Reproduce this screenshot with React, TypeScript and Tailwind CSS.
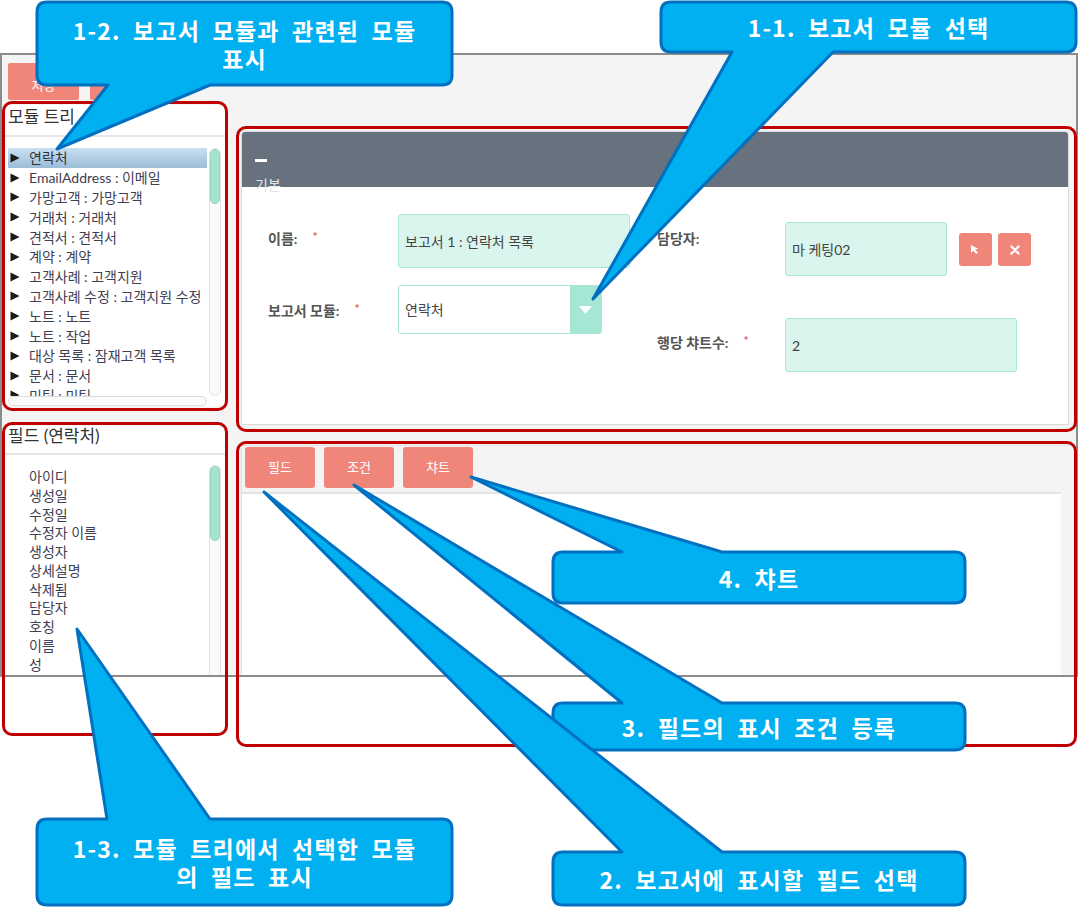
import React from "react";

const tree = [
  "연락처",
  "EmailAddress : 이메일",
  "가망고객 : 가망고객",
  "거래처 : 거래처",
  "견적서 : 견적서",
  "계약 : 계약",
  "고객사례 : 고객지원",
  "고객사례 수정 : 고객지원 수정",
  "노트 : 노트",
  "노트 : 작업",
  "대상 목록 : 잠재고객 목록",
  "문서 : 문서",
  "미팅 : 미팅",
];

const fields = [
  "아이디",
  "생성일",
  "수정일",
  "수정자 이름",
  "생성자",
  "상세설명",
  "삭제됨",
  "담당자",
  "호칭",
  "이름",
  "성",
];

function Tri() {
  return (
    <svg width="10" height="10" viewBox="0 0 10 10" className="shrink-0">
      <path d="M0.5 0.5 L9.5 5 L0.5 9.5 Z" fill="#1b1b1b" />
    </svg>
  );
}

function Callouts() {
  const paths = [
    // 1-3
    "M47,819 H107 L77,629 L210,819 H442 Q452,819 452,829 V895 Q452,905 442,905 H47 Q37,905 37,895 V829 Q37,819 47,819 Z",
    // 1-2
    "M47,2 H442 Q452,2 452,12 V75 Q452,85 442,85 H210 L57,149 L108,85 H47 Q37,85 37,75 V12 Q37,2 47,2 Z",
    // 1-1
    "M671,2 H1066 Q1076,2 1076,12 V42 Q1076,52 1066,52 H833 L593,299 L732,52 H671 Q661,52 661,42 V12 Q661,2 671,2 Z",
    // 3
    "M563,703 H622 L354,485 L722,703 H955 Q965,703 965,713 V740 Q965,750 955,750 H563 Q553,750 553,740 V713 Q553,703 563,703 Z",
    // 2
    "M563,852 H622 L264,492 L722,852 H955 Q965,852 965,862 V895 Q965,905 955,905 H563 Q553,905 553,895 V862 Q553,852 563,852 Z",
    // 4
    "M563,552 H622 L471,477 L722,552 H955 Q965,552 965,562 V593 Q965,603 955,603 H563 Q553,603 553,593 V562 Q553,552 563,552 Z",
  ];
  return (
    <svg
      className="absolute left-0 top-0 pointer-events-none"
      width="1078"
      height="909"
      viewBox="0 0 1078 909"
    >
      {paths.map((d, i) => (
        <path key={i} d={d} fill="#00b0f0" stroke="#0070c0" strokeWidth="3" strokeLinejoin="round" />
      ))}
    </svg>
  );
}

const calloutText =
  "absolute flex flex-col items-center justify-center text-center text-white font-bold text-[23px] leading-[28px] tracking-[1.2px] [word-spacing:6px] font-['Noto_Sans_CJK_KR',sans-serif]";

const label = "leading-[20px] text-[14px] font-bold text-[#555]";
const star = "ml-[15px] text-[12px] text-[#e05a5a] relative top-[-3px]";
const mintInput =
  "bg-[#d9f5ed] border border-[#a9e7d3] rounded-[3px] px-[6px] flex items-center text-[14px] text-[#444]";

export default function App() {
  return (
    <div className="relative w-[1078px] h-[909px] overflow-hidden bg-white font-[Lato,'Noto_Sans_CJK_KR',sans-serif]">
      {/* screenshot */}
      <div className="mt-[53px] w-[1078px] h-[624px] border-2 border-[#8c8c8c] bg-[#f4f4f4] flex flex-col">
        <div className="flex gap-[11px] pt-[8px] pl-[6px]">
          <div className="w-[71px] h-[37px] bg-[#f0867a] text-white text-[13px] rounded-[2px] flex items-center justify-center pt-[8px]">
            저장
          </div>
          <div className="w-[70px] h-[37px] bg-[#f0867a] text-white text-[13px] rounded-[2px] flex items-center justify-center pt-[8px]">
            취소
          </div>
        </div>

        <div className="flex flex-1 min-h-0 mt-[5px]">
          {/* left column */}
          <div className="ml-[3px] w-[220px] flex flex-col">
            {/* module tree */}
            <div className="h-[301px] shrink-0 bg-white flex flex-col">
              <div className="h-[32px] shrink-0 border-b-2 border-[#e6e6e6] px-[3px] text-[17px] leading-[24px] text-[#333]">
                모듈 트리
              </div>
              <div className="flex h-[259px] shrink-0">
                <div className="flex-1 overflow-hidden pt-[11px] pl-[3px] pr-[2px]">
                  {tree.map((t, i) => (
                    <div
                      key={i}
                      className={
                        "h-[19.8px] flex items-center pl-[2px] text-[14px] whitespace-nowrap " +
                        (i === 0
                          ? "bg-gradient-to-b from-[#c9e0f2] to-[#9cbcd8] text-[#333]"
                          : "text-[#3f4052]")
                      }
                    >
                      <Tri />
                      <span className="ml-[9px]">{t}</span>
                    </div>
                  ))}
                </div>
                <div className="w-[12px] mr-[4px] mt-[11px] rounded-full border border-[#e2e2e2] bg-[#fafafa] overflow-hidden">
                  <div className="h-[55px] rounded-full bg-[#a4e3cd] border border-[#8fd8c0]" />
                </div>
              </div>
              <div className="h-[10px] shrink-0 ml-[3px] mr-[18px] rounded-full border border-[#dedede] bg-[#fafafa]" />
            </div>

            {/* fields */}
            <div className="mt-[20px] flex-1 min-h-0 bg-white flex flex-col overflow-hidden">
              <div className="h-[29px] shrink-0 border-b-2 border-[#e6e6e6] px-[3px] text-[17px] leading-[20px] text-[#333]">
                필드 (연락처)
              </div>
              <div className="flex flex-1 min-h-0">
                <div className="flex-1 overflow-hidden pt-[12px] pl-[24px]">
                  {fields.map((f, i) => (
                    <div key={i} className="h-[18.8px] flex items-center text-[14px] text-[#3f4052] whitespace-nowrap">
                      {f}
                    </div>
                  ))}
                </div>
                <div className="w-[12px] mr-[4px] mt-[10px] border-l border-r border-t rounded-t-full border-[#e2e2e2] bg-[#fafafa]">
                  <div className="h-[75px] rounded-full bg-[#a4e3cd] border border-[#8fd8c0]" />
                </div>
              </div>
            </div>
          </div>

          {/* right column */}
          <div className="ml-[16px] w-[828px] mt-[26px] flex flex-col">
            <div className="h-[294px] shrink-0 border border-[#dcdcdc] rounded-t-[4px] bg-white flex flex-col">
              <div className="h-[55px] shrink-0 bg-[#67727e] rounded-t-[3px] pt-[27px] pl-[13px]">
                <div className="h-[3px] w-[12px] bg-white" />
                <div className="relative z-10 mt-[15px] text-[14px] leading-[16px] text-[#e3e6e9]">기본</div>
              </div>
              <div className="flex pl-[26px] pt-[27px]">
                {/* left form col */}
                <div className="w-[362px] flex flex-col">
                  <div className="flex h-[54px]">
                    <div className={"w-[130px] pt-[15px] " + label}>
                      이름:<span className={star}>*</span>
                    </div>
                    <div className={"w-[232px] h-[54px] " + mintInput}>보고서 1 : 연락처 목록</div>
                  </div>
                  <div className="flex h-[49px] mt-[17px]">
                    <div className={"w-[130px] pt-[16px] " + label}>
                      보고서 모듈:<span className={star}>*</span>
                    </div>
                    <div className="w-[204px] h-[49px] bg-white border border-[#a9e7d3] rounded-[3px] flex overflow-hidden">
                      <div className="flex-1 px-[6px] flex items-center text-[14px] text-[#444]">연락처</div>
                      <div className="w-[31px] bg-[#a6e6d4] flex items-center justify-center">
                        <svg width="13" height="8" viewBox="0 0 13 8">
                          <path d="M0 0 H13 L6.5 8 Z" fill="#ffffff" />
                        </svg>
                      </div>
                    </div>
                  </div>
                </div>

                {/* right form col */}
                <div className="ml-[27px] flex flex-col mt-[8px]">
                  <div className="flex h-[54px]">
                    <div className={"w-[128px] pt-[7px] " + label}>담당자:</div>
                    <div className={"w-[162px] h-[54px] " + mintInput}>마 케팅02</div>
                    <div className="flex gap-[6px] ml-[12px] mt-[11px]">
                      <div className="w-[33px] h-[33px] bg-[#f0867a] rounded-[3px] flex items-center justify-center">
                        <svg width="11" height="11" viewBox="0 0 11 11">
                          <path d="M1 1 L1 9 L3.3 6.8 L6.2 10 L7.8 8.6 L5 5.5 L8.5 5 Z" fill="#ffffff" />
                        </svg>
                      </div>
                      <div className="w-[33px] h-[33px] bg-[#f0867a] rounded-[3px] flex items-center justify-center">
                        <svg width="10" height="10" viewBox="0 0 10 10">
                          <path d="M1.5 1.5 L8.5 8.5 M8.5 1.5 L1.5 8.5" stroke="#ffffff" strokeWidth="2.4" strokeLinecap="round" />
                        </svg>
                      </div>
                    </div>
                  </div>
                  <div className="flex h-[54px] mt-[42px]">
                    <div className={"w-[128px] pt-[15px] " + label}>
                      행당 챠트수:<span className={star}>*</span>
                    </div>
                    <div className={"w-[232px] h-[54px] " + mintInput}>2</div>
                  </div>
                </div>
              </div>
            </div>

            {/* tabs panel */}
            <div className="mt-[20px] flex-1 min-h-0 flex flex-col border-t border-l border-[#e2e2e2]">
              <div className="flex gap-[9px] pt-[1px] pl-[3px]">
                {["필드", "조건", "챠트"].map((t) => (
                  <div
                    key={t}
                    className="w-[70px] h-[41px] bg-[#f0867a] rounded-[3px] text-white text-[13px] flex items-center justify-center"
                  >
                    {t}
                  </div>
                ))}
              </div>
              <div className="mt-[4px] h-[2px] w-[819px] bg-[#e3e3e3]" />
              <div className="flex-1 w-[819px] bg-white" />
            </div>
          </div>
        </div>
      </div>

      {/* red annotation boxes */}
      <div className="absolute left-[2px] top-[101px] w-[226px] h-[310px] border-[3px] border-[#c00000] rounded-[10px] pointer-events-none" />
      <div className="absolute left-[2px] top-[422px] w-[226px] h-[314px] border-[3px] border-[#c00000] rounded-[10px] pointer-events-none" />
      <div className="absolute left-[236px] top-[126px] w-[841px] h-[306px] border-[3px] border-[#c00000] rounded-[10px] pointer-events-none" />
      <div className="absolute left-[236px] top-[441px] w-[841px] h-[306px] border-[3px] border-[#c00000] rounded-[10px] pointer-events-none" />

      {/* callouts */}
      <Callouts />
      <div className={calloutText + " left-[37px] top-[2px] w-[415px] h-[83px]"}>
        <div>1-2. 보고서 모듈과 관련된 모듈</div>
        <div>표시</div>
      </div>
      <div className={calloutText + " left-[661px] top-[2px] w-[415px] h-[50px]"}>
        <div>1-1. 보고서 모듈 선택</div>
      </div>
      <div className={calloutText + " left-[553px] top-[552px] w-[412px] h-[51px]"}>
        <div>4. 챠트</div>
      </div>
      <div className={calloutText + " left-[553px] top-[703px] w-[412px] h-[47px]"}>
        <div>3. 필드의 표시 조건 등록</div>
      </div>
      <div className={calloutText + " left-[553px] top-[852px] w-[412px] h-[53px]"}>
        <div>2. 보고서에 표시할 필드 선택</div>
      </div>
      <div className={calloutText + " left-[37px] top-[819px] w-[415px] h-[86px]"}>
        <div>1-3. 모듈 트리에서 선택한 모듈</div>
        <div>의 필드 표시</div>
      </div>
    </div>
  );
}
